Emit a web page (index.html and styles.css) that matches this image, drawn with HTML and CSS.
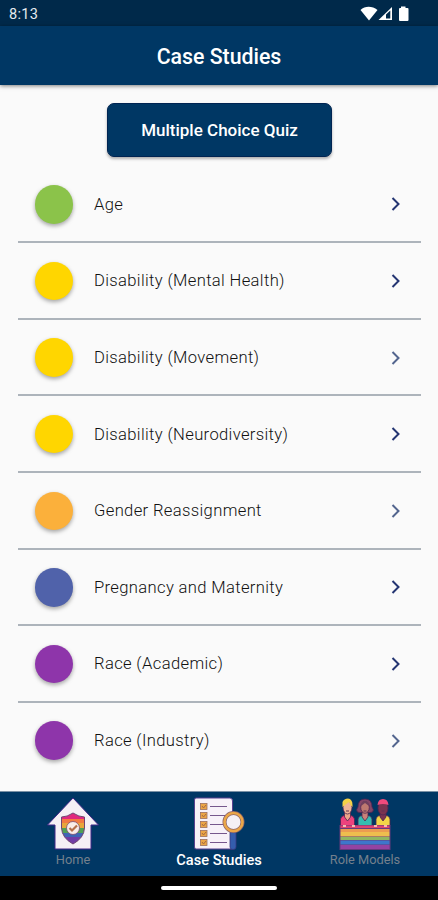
FILE: index.html
```html
<!DOCTYPE html>
<html lang="en">
<head>
    <meta charset="UTF-8">
    <meta name="viewport" content="width=device-width, initial-scale=1.0">
    <title>Case Studies</title>
    <link rel="stylesheet" href="styles.css">
</head>
<body>
    <div id="app">
        <div id="status-bar">
            <span class="time">8:13</span>
            <svg class="status-icons" width="50" height="16" viewBox="0 0 50 16">
                <path d="M0.5 4 C5 -0.2 12 -0.2 17.500 4 L9 14.500 Z" fill="#fff"/>
                <path d="M18.500 14 L32 1 V14 Z" fill="#fff"/>
                <path d="M26 12.500 V8.500 L30.300 4.500 V12.500 Z" fill="#00294a"/>
                <path d="M41 0.500 H45.500 V2 H47.500 Q48.500 2 48.500 3 V14 Q48.500 15 47.500 15 H40 Q39 15 39 14 V3 Q39 2 40 2 H41 Z" fill="#fff"/>
            </svg>
        </div>

        <div id="header">
            <h1>Case Studies</h1>
        </div>

        <div id="content">
            <button class="quiz-button">Multiple Choice Quiz</button>

            <div class="case-list">
                <div class="case">
                    <span class="dot age"></span>
                    <span class="case-name">Age</span>
                    <svg class="arrow" width="10" height="14" viewBox="0 0 10 14"><path d="M1.500 1 L7.500 7 L1.500 13"/></svg>
                </div>
                <div class="case">
                    <span class="dot disability"></span>
                    <span class="case-name">Disability (Mental Health)</span>
                    <svg class="arrow" width="10" height="14" viewBox="0 0 10 14"><path d="M1.500 1 L7.500 7 L1.500 13"/></svg>
                </div>
                <div class="case">
                    <span class="dot disability"></span>
                    <span class="case-name">Disability (Movement)</span>
                    <svg class="arrow soft" width="10" height="14" viewBox="0 0 10 14"><path d="M1.500 1 L7.500 7 L1.500 13"/></svg>
                </div>
                <div class="case">
                    <span class="dot disability"></span>
                    <span class="case-name">Disability (Neurodiversity)</span>
                    <svg class="arrow" width="10" height="14" viewBox="0 0 10 14"><path d="M1.500 1 L7.500 7 L1.500 13"/></svg>
                </div>
                <div class="case">
                    <span class="dot gender"></span>
                    <span class="case-name">Gender Reassignment</span>
                    <svg class="arrow soft" width="10" height="14" viewBox="0 0 10 14"><path d="M1.500 1 L7.500 7 L1.500 13"/></svg>
                </div>
                <div class="case">
                    <span class="dot pregnancy"></span>
                    <span class="case-name">Pregnancy and Maternity</span>
                    <svg class="arrow" width="10" height="14" viewBox="0 0 10 14"><path d="M1.500 1 L7.500 7 L1.500 13"/></svg>
                </div>
                <div class="case">
                    <span class="dot race"></span>
                    <span class="case-name">Race (Academic)</span>
                    <svg class="arrow" width="10" height="14" viewBox="0 0 10 14"><path d="M1.500 1 L7.500 7 L1.500 13"/></svg>
                </div>
                <div class="case">
                    <span class="dot race"></span>
                    <span class="case-name">Race (Industry)</span>
                    <svg class="arrow soft" width="10" height="14" viewBox="0 0 10 14"><path d="M1.500 1 L7.500 7 L1.500 13"/></svg>
                </div>
            </div>
        </div>

        <div id="tab-bar">
            <div class="tab">
                <!-- House with rainbow shield -->
                <svg width="54" height="54" viewBox="0 0 54 54">
                    <defs>
                        <clipPath id="shield"><path d="M27 16 Q33 20 38.500 20 V31 Q38 41 27 47 Q16 41 15.500 31 V20 Q21 20 27 16 Z"/></clipPath>
                    </defs>
                    <path d="M27 1 L52.500 28 H45 V52 H9 V28 H1.500 Z" fill="#f5f0f5" stroke="#432787" stroke-width="1"/>
                    <g clip-path="url(#shield)">
                        <rect x="15" y="15" width="24" height="7" fill="#e0287e"/>
                        <rect x="15" y="22" width="24" height="4" fill="#f27a43"/>
                        <rect x="15" y="26" width="24" height="5" fill="#e8a63a"/>
                        <rect x="15" y="31" width="24" height="5" fill="#50a055"/>
                        <rect x="15" y="36" width="24" height="4" fill="#3f65b5"/>
                        <rect x="15" y="40" width="24" height="8" fill="#713ca5"/>
                    </g>
                    <path d="M27 16 Q33 20 38.500 20 V31 Q38 41 27 47 Q16 41 15.500 31 V20 Q21 20 27 16 Z" fill="none" stroke="#704572" stroke-width="1"/>
                    <circle cx="27" cy="31" r="6.500" fill="#f9ece9" stroke="#7c4d70" stroke-width="0.800"/>
                    <path d="M23.500 31 L26 33.500 L31 28.500" fill="none" stroke="#b5704c" stroke-width="2.200"/>
                </svg>
                <span>Home</span>
            </div>
            <div class="tab active">
                <!-- Checklist with magnifying glass -->
                <svg width="54" height="54" viewBox="0 0 54 54">
                    <path d="M4 1 H38 Q40.500 1 40.500 4 V52 H4 Q2.500 52 2.500 50 V3 Q2.500 1 4 1 Z" fill="#f7f1f8" stroke="#59408e" stroke-width="1"/>
                    <path d="M38 34 H44 V50 Q44 52.500 41 52.500 Q38 52.500 38 50 Z" fill="#345dac" stroke="#39377e" stroke-width="0.800"/>
                    <g fill="#eba545" stroke="#9b7160" stroke-width="0.800">
                        <rect x="8.500" y="6.500" width="6.500" height="6"/>
                        <rect x="8.500" y="15.500" width="6.500" height="6"/>
                        <rect x="8.500" y="24.500" width="6.500" height="6"/>
                        <rect x="8.500" y="33.500" width="6.500" height="6"/>
                        <rect x="8.500" y="42.500" width="6.500" height="6"/>
                    </g>
                    <path d="M10 9 L11.500 11 L14 8 M10 18 L11.500 20 L14 17 M10 27 L11.500 29 L14 26 M10 36 L11.500 38 L14 35 M10 45 L11.500 47 L14 44" fill="none" stroke="#a66a43" stroke-width="1"/>
                    <path d="M18 9.500 H35 M18 18.500 H33 M18 27.500 H31 M18 36.500 H35 M18 45.500 H35" stroke="#76578c" stroke-width="1.200"/>
                    <circle cx="41.500" cy="25" r="9" fill="#f5f1f5" stroke="#8e6567" stroke-width="4"/>
                    <circle cx="41.500" cy="25" r="9" fill="none" stroke="#eba747" stroke-width="2.600"/>
                </svg>
                <span>Case Studies</span>
            </div>
            <div class="tab">
                <!-- Three people behind a rainbow banner -->
                <svg width="54" height="54" viewBox="0 0 54 54">
                    <g stroke="#4d2552" stroke-width="0.800">
                        <path d="M2.500 29 V22 Q3 19 7 18 H12 Q16 19 16.500 22 V29 Z" fill="#ed437d"/>
                        <path d="M20 29 V22 Q20.500 19 24.500 18 H29.500 Q33.500 19 34 22 V29 Z" fill="#36bcb0"/>
                        <path d="M38 29 V22 Q38.500 19 42.500 18 H47.500 Q51.500 19 52 22 V29 Z" fill="#f3d548"/>
                        <path d="M19.500 15 Q17.500 13 20 10 Q20 2 27 2 Q34 2 34 10 Q36.500 13 34.500 15 Q31 17 27 14 Q23 17 19.500 15 Z" fill="#854668"/>
                        <path d="M6.500 15 H12.500 V20 L9.500 24 L6.500 20 Z" fill="#eca589"/>
                        <path d="M24 15 H30 V20 L27 24 L24 20 Z" fill="#c98078"/>
                        <path d="M42 15 H48 V20 L45 24 L42 20 Z" fill="#7b3350"/>
                        <ellipse cx="9.500" cy="10.500" rx="4.500" ry="6.500" fill="#f0b496"/>
                        <ellipse cx="27" cy="10.500" rx="4.300" ry="5.800" fill="#be7970"/>
                        <ellipse cx="45" cy="11" rx="5" ry="7" fill="#7b3350"/>
                    </g>
                    <path d="M4.500 10 V5 Q6 1.500 10 1.500 Q14.500 2 14.500 8 V10 Q12 8 11 5 Q8 7 4.500 10 Z" fill="#f5d247"/>
                    <path d="M23 9 Q23 4 27 4 Q31 4 31 9 L27 6 Z" fill="#70405e"/>
                    <path d="M39.500 8 Q40 2 45 2 Q50 2 50.500 8 Q45 6 39.500 8 Z" fill="#f14b7d"/>
                    <path d="M8 14 H11 M25.500 14 H28.500 M43.500 14 H46.500" stroke="#633052" stroke-width="1"/>
                    <rect x="1.500" y="28" width="51" height="25" fill="#653a7c"/>
                    <rect x="2.500" y="28.500" width="49" height="2.500" fill="#db4372"/>
                    <rect x="2.500" y="32" width="49" height="3" fill="#ed9c50"/>
                    <rect x="2.500" y="35" width="49" height="4.500" fill="#efbd4e"/>
                    <rect x="2.500" y="40" width="49" height="3" fill="#91b661"/>
                    <rect x="2.500" y="43.500" width="49" height="4" fill="#3e76cb"/>
                    <rect x="2.500" y="48" width="49" height="4" fill="#9443a2"/>
                    <path d="M5 29 H8 M14 29 H17 M36 29 H39 M46 29 H49" stroke="#f0bdb1" stroke-width="2"/>
                </svg>
                <span>Role Models</span>
            </div>
        </div>

        <div id="system-nav">
            <div class="home-line"></div>
        </div>
    </div>
</body>
</html>
```

FILE: styles.css
```css
body, html {
    margin: 0;
    padding: 0;
    height: 100%;
}

body {
    font-family: Roboto, sans-serif;
    background-color: #fafafa;
    overflow: hidden;
}

#app {
    display: flex;
    flex-direction: column;
    height: 900px;
    width: 438px;
}

#status-bar {
    height: 26px;
    box-sizing: border-box;
    padding: 2px 25px 0 9px;
    display: flex;
    align-items: center;
    justify-content: space-between;
    background-color: #00294a;
    color: #e6ebef;
}

.time {
    font-size: 14.5px;
    font-weight: 400;
    letter-spacing: 0.3px;
}

.status-icons {
    margin-right: 3px;
}

#header {
    height: 59px;
    display: flex;
    align-items: center;
    justify-content: center;
    background-color: #003764;
    color: #fff;
    box-shadow: 0 1px 4px rgba(0, 0, 0, 0.5);
}

#header h1 {
    margin: 0;
    padding-top: 2px;
    font-size: 21.3px;
    font-weight: 500;
    line-height: 26px;
}

#content {
    flex: 1;
    display: flex;
    flex-direction: column;
    align-items: center;
    padding: 18px 17px 0 18px;
}

.quiz-button {
    width: 225px;
    height: 54px;
    padding: 0;
    border: 1px solid #002452;
    border-radius: 7px;
    background-color: #003764;
    color: #fff;
    font-family: Roboto, sans-serif;
    font-size: 17px;
    font-weight: 500;
    box-shadow: 0 2px 3px rgba(0, 0, 0, 0.3);
}

.case-list {
    width: 100%;
    margin-top: 9.6px;
}

.case {
    height: 76.6px;
    box-sizing: border-box;
    display: flex;
    align-items: center;
    padding: 1px 20px 0 16.5px;
    border-bottom: 2px solid #adb4bb;
}

.case:last-child {
    border-bottom-color: transparent;
}

.dot {
    width: 38.5px;
    height: 38.5px;
    border-radius: 50%;
    box-shadow: 0 2px 4px rgba(0, 0, 0, 0.35);
}

.age {
    background-color: #8bc34a;
}

.disability {
    background-color: #ffd600;
}

.gender {
    background-color: #fbb03b;
}

.pregnancy {
    background-color: #5062aa;
}

.race {
    background-color: #8e35aa;
}

.case-name {
    flex: 1;
    margin-left: 21px;
    font-size: 16.6px;
    font-weight: 300;
    letter-spacing: 0.35px;
    color: #111;
}

.arrow path {
    fill: none;
    stroke: #243572;
    stroke-width: 2;
}

.soft path {
    stroke: #53658e;
}

#tab-bar {
    height: 84px;
    display: flex;
    background-color: #003764;
    border-top: 1px solid #7b91a5;
}

.tab {
    flex: 1;
    display: flex;
    flex-direction: column;
    align-items: center;
    padding-top: 5px;
    font-size: 12.8px;
    line-height: 18px;
    color: #74808c;
}

.active {
    color: #fff;
    font-size: 14.6px;
    font-weight: 500;
}

#system-nav {
    height: 24px;
    display: flex;
    align-items: center;
    justify-content: center;
    background-color: #000;
}

.home-line {
    width: 116px;
    height: 4px;
    border-radius: 2px;
    background-color: #fff;
}
```
